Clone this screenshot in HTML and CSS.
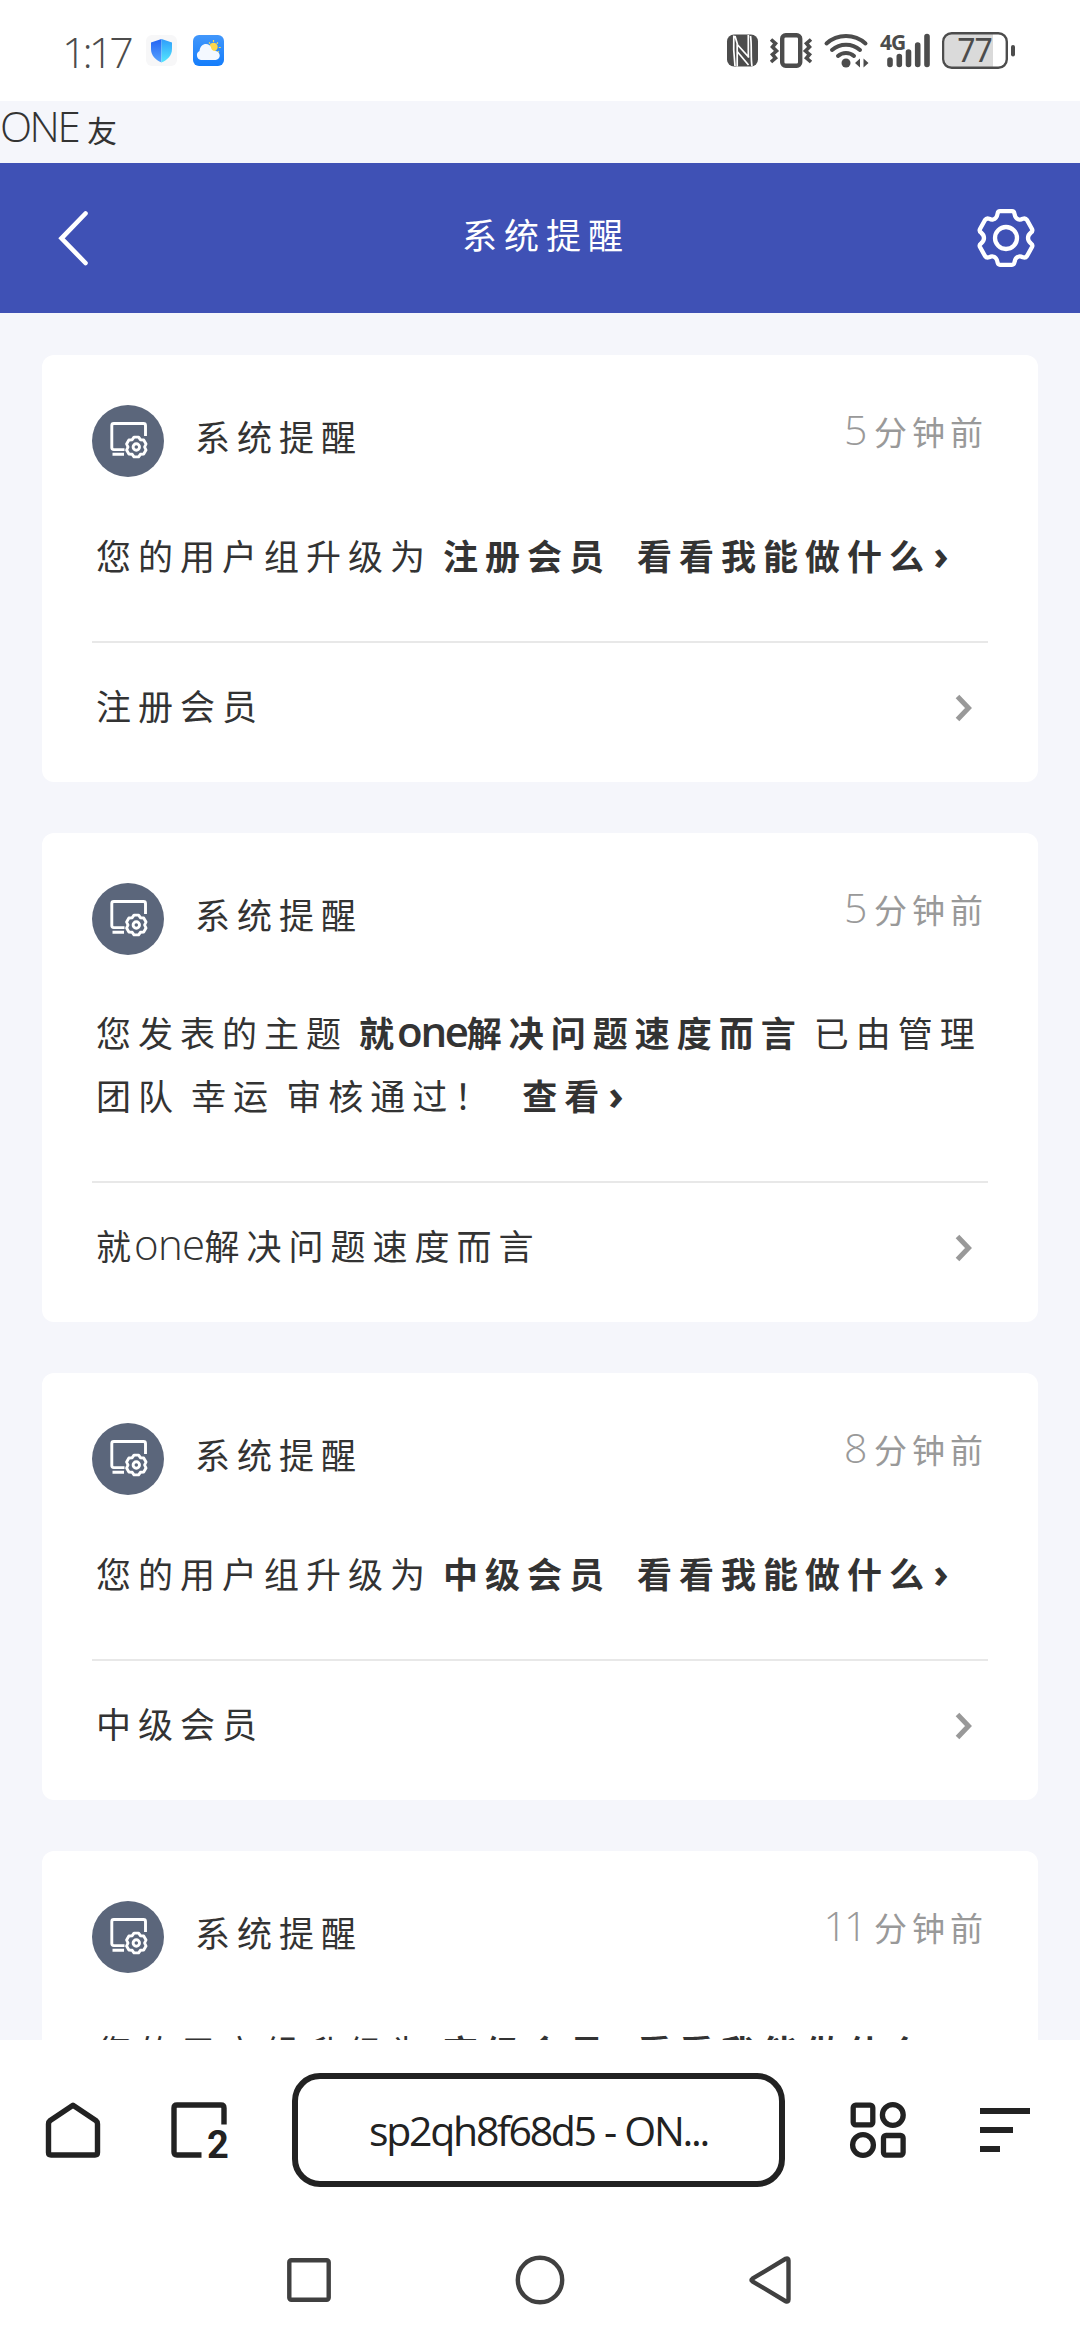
FILE: index.html
```html
<!DOCTYPE html>
<html lang="zh-CN">
<head>
<meta charset="utf-8">
<title>系统提醒</title>
<link rel="stylesheet" href="styles.css">
</head>
<body>
<svg class="sprite" width="0" height="0">
  <symbol id="notice" viewBox="0 0 72 72">
    <circle cx="36" cy="36" r="36" fill="#5b667b"/>
    <g fill="none" stroke="#fff" stroke-width="2.900">
      <path d="M32.500 44.600H21.800a2 2 0 0 1-2-2V20.500a2 2 0 0 1 2-2H51.500a2 2 0 0 1 2 2V31M20.500 49.200H32" />
      <path transform="translate(44.300 42)" stroke-linejoin="round" d="M-2.300-9.900H2.300L4.100-7.300 7.400-7 9.700-3 8.300 0 9.700 3 7.400 7 4.100 7.300 2.300 9.900H-2.300L-4.100 7.300-7.400 7-9.700 3-8.300 0-9.700-3-7.400-7-4.100-7.300Z"/>
      <circle cx="44.300" cy="42" r="3.200"/>
    </g>
  </symbol>
  <symbol id="chevron" viewBox="0 0 18 28">
    <path d="M2.500 2.500 13.500 14 2.500 25.500" fill="none" stroke="#999" stroke-width="5"/>
  </symbol>
</svg>

<header class="status">
  <span class="clock">1:17</span>
  <svg class="app" viewBox="0 0 31 31">
    <defs><linearGradient id="sl" x2="0" y2="1"><stop stop-color="#2262f3"/><stop offset="1" stop-color="#5aa6ff"/></linearGradient>
    <linearGradient id="sr" x2="0" y2="1"><stop stop-color="#2f9dfb"/><stop offset="1" stop-color="#55e8fd"/></linearGradient></defs>
    <rect width="31" height="31" rx="6" fill="#f7f7f8"/>
    <path d="M15.500 4 5 7.500V14c0 6.500 4.500 11 10.500 13.500z" fill="url(#sl)"/>
    <path d="M15.500 4 26 7.500V14c0 6.500-4.500 11-10.500 13.500z" fill="url(#sr)"/>
  </svg>
  <svg class="app" viewBox="0 0 31 31">
    <defs><linearGradient id="wb" x2="0" y2="1"><stop stop-color="#4297fb"/><stop offset="1" stop-color="#147dfb"/></linearGradient></defs>
    <rect width="31" height="31" rx="6" fill="url(#wb)"/>
    <circle cx="20.500" cy="12" r="4.200" fill="#ffd84c"/>
    <path d="M20.500 5v2M25 7.500l-1.300 1.200M27.800 12.500h-2M16 7.500l1.200 1.200M26 17.200l-1.200-1" stroke="#ffd84c" stroke-width="1.200"/>
    <path d="M8 25a4.800 4.800 0 0 1-1.500-9C7 11.500 9.800 9 13 9c2.500 0 4.300 1.500 5 3.500.5 2 1.700 3.500 4 3.500a4.500 4.500 0 0 1 .5 9z" fill="#f4f8ff"/>
  </svg>
  <span class="spacer"></span>
  <svg class="sys" width="288" height="40" viewBox="727 31 288 40" fill="none" stroke="#4c4c4c">
    <rect x="727" y="34.500" width="31" height="32" rx="7" fill="#4c4c4c" stroke="none"/>
    <path d="M733.800 35.500C733.300 45 733.800 56 735 66M737.200 66.500V44.500L749 57.500M737.200 51.500 748.500 65M735 36l2.500 8.500M748.300 35V57.500M750.500 36c1.500 9 0 22 1.500 30" stroke="#fff" stroke-width="1.700"/>
    <rect x="782.200" y="35.200" width="18" height="30.600" rx="3.500" stroke-width="4.400"/>
    <path d="M771 39.500l4.500 4-3 3.500 4 4-4 3.500 3 3.500-4.500 4M811 39.500l-4.500 4 3 3.500-4 4 4 3.500-3 3.500 4.500 4" stroke-width="3.600"/>
    <g stroke-width="4" stroke-linecap="round"><path d="M826.500 43.500c11-10 28-10 39 0M832 50c8-7 20-7 28 0M838 56c4.500-4 11.500-4 16 0"/></g>
    <circle cx="846" cy="63" r="4.500" fill="#4c4c4c" stroke="none"/>
    <path d="M855 63l5-4.500v9zM868.500 63l-5-4.500v9z" fill="#4c4c4c" stroke="none"/>
    <text x="880" y="50" class="net">4G</text>
    <g stroke-width="5.600" stroke-linecap="round"><path d="M890 60v4.500M899.300 56.500v8M908.500 52v12.500M917.700 45v19.500M927 36.500v28"/></g>
    <path d="M952 34h41v33h-41q-7 0-7-7V41q0-7 7-7z" fill="#dadada" stroke="none"/>
    <rect x="943.200" y="33.200" width="63.600" height="34.600" rx="8.500" stroke-width="2.400"/>
    <rect x="1011" y="45" width="4" height="11.500" rx="2" fill="#4c4c4c" stroke="none"/>
    <text x="974.500" y="62" text-anchor="middle" class="pct">77</text>
  </svg>
</header>

<div class="site"><span class="lat">ONE</span> 友</div>

<nav class="topbar">
  <svg width="36" height="60" viewBox="55 207 36 60"><path d="M84.500 212.500 60.500 237.300 84.500 262" fill="none" stroke="#fff" stroke-width="4.600" stroke-linecap="round"/></svg>
  <h1 class="topbar-title">系统提醒</h1>
  <svg width="60" height="60" viewBox="-30 -30 60 60" fill="none" stroke="#fff" stroke-width="4.300" stroke-linejoin="round">
    <circle r="11"/>
    <path d="M-6-26.800H6Q8-26.800 8.400-24.500C9-21 10.500-19 13-18.500Q14.500-18 17-19.300Q19.500-20.200 21-18L26-9Q27-7 25-5.500C22-3 22-1.500 22 0S22 3 25 5.500Q27 7 26 9L21 18Q19.500 20.200 17 19.300Q14.500 18 13 18.500C10.500 19 9 21 8.400 24.500Q8 26.800 6 26.800H-6Q-8 26.800-8.400 24.500C-9 21-10.500 19-13 18.500Q-14.500 18-17 19.300Q-19.500 20.200-21 18L-26 9Q-27 7-25 5.500C-22 3-22 1.500-22 0S-22-3-25-5.500Q-27-7-26-9L-21-18Q-19.500-20.200-17-19.300Q-14.500-18-13-18.500C-10.500-19-9-21-8.400-24.500Q-8-26.800-6-26.800Z"/>
  </svg>
</nav>

<main class="feed">
  <article class="card">
    <div class="head"><svg class="avatar"><use href="#notice"/></svg><h2 class="name">系统提醒</h2><time class="time"><span class="lat">5</span> 分钟前</time></div>
    <p class="message">您的用户组升级为 <b>注册会员</b><b class="link">看看我能做什么<span class="lat arrow">›</span></b></p>
    <div class="foot"><span>注册会员</span><svg class="more"><use href="#chevron"/></svg></div>
  </article>
  <article class="card">
    <div class="head"><svg class="avatar"><use href="#notice"/></svg><h2 class="name">系统提醒</h2><time class="time"><span class="lat">5</span> 分钟前</time></div>
    <p class="message">您发表的主题 <b>就<span class="lat word">one</span>解决问题速度而言</b> 已由管理<br>团队 幸运 审核通过<span class="mark">！</span><b class="link">查看<span class="lat arrow">›</span></b></p>
    <div class="foot"><span>就<span class="lat word">one</span>解决问题速度而言</span><svg class="more"><use href="#chevron"/></svg></div>
  </article>
  <article class="card">
    <div class="head"><svg class="avatar"><use href="#notice"/></svg><h2 class="name">系统提醒</h2><time class="time"><span class="lat">8</span> 分钟前</time></div>
    <p class="message">您的用户组升级为 <b>中级会员</b><b class="link">看看我能做什么<span class="lat arrow">›</span></b></p>
    <div class="foot"><span>中级会员</span><svg class="more"><use href="#chevron"/></svg></div>
  </article>
  <article class="card">
    <div class="head"><svg class="avatar"><use href="#notice"/></svg><h2 class="name">系统提醒</h2><time class="time"><span class="lat">11</span> 分钟前</time></div>
    <p class="message">您的用户组升级为 <b>高级会员</b><b class="link">看看我能做什么<span class="lat arrow">›</span></b></p>
  </article>
</main>

<footer class="browser">
  <svg width="56" height="56" viewBox="0 0 56 56" fill="none" stroke="#222" stroke-width="5.400" stroke-linejoin="round"><path d="M28 3.200 50.800 18.500Q52.500 19.800 52.500 22V50.500Q52.500 53 50 53H6Q3.500 53 3.500 50.500V22Q3.500 19.800 5.200 18.500Z"/></svg>
  <svg width="56" height="56" viewBox="0 0 56 56" fill="none" stroke="#222" stroke-width="5.400"><path d="M53 22.500V6Q53 3 50 3H6Q3 3 3 6V50Q3 53 6 53H30.500"/><text x="47" y="55.700" class="tabs" text-anchor="middle">2</text></svg>
  <div class="address"><span>sp2qh8f68d5 - ON...</span></div>
  <svg width="56" height="56" viewBox="0 0 56 56" fill="none" stroke="#222" stroke-width="5.300"><rect x="3.200" y="3.200" width="19.600" height="19.600" rx="2.500"/><circle cx="42.800" cy="13" r="10.400"/><circle cx="13" cy="43" r="10.400"/><rect x="33.500" y="33.500" width="19.600" height="19.600" rx="2.500"/></svg>
  <svg width="50" height="44" viewBox="0 0 50 44" fill="#222"><path d="M0 0h50v6H0zM0 19h33v6H0zM0 38h20v6H0z"/></svg>
</footer>
<div class="keys">
  <svg width="50" height="50" viewBox="-25 -25 50 50"><rect x="-19.700" y="-19.700" width="39.400" height="39.400" rx="2"/></svg>
  <svg width="50" height="50" viewBox="-25 -25 50 50"><circle r="22.200"/></svg>
  <svg width="50" height="50" viewBox="-25 -25 50 50"><path d="M-18.600-1.300 14.600-21.200Q17.500-22.500 17.500-19.500V19.500Q17.500 22.500 14.600 21.200L-18.600 1.300Q-20.500 0-18.600-1.300Z"/></svg>
</div>
</body>
</html>
```
FILE: styles.css
```css
* { box-sizing: border-box; margin: 0; }
body {
  display: flex;
  flex-direction: column;
  width: 1080px;
  height: 2340px;
  overflow: hidden;
  background: #fff;
  color: #333;
  font: 400 35px "Open Sans", "Noto Sans CJK SC", sans-serif;
  letter-spacing: 7px;
  word-spacing: -5px;
}
svg { display: block; flex: none; overflow: visible; }
.sprite { position: absolute; }
.lat { font-size: 42px; font-weight: 350; line-height: 0; letter-spacing: -2px; }
.word { margin-left: -4px; letter-spacing: -0.7px; }
b .word { font-weight: 600; letter-spacing: -2.3px; }
.arrow { margin-left: 2px; font-weight: 700; }

.status { display: flex; align-items: center; flex: none; height: 101px; padding: 0 65px 0 62px; }
.clock { width: 84px; font-size: 43px; font-weight: 350; line-height: 60px; letter-spacing: -4px; color: #4c4c4c; padding-top: 2px; }
.app { width: 31px; height: 31px; margin-right: 16px; }
.spacer { flex: 1; }
.net { font: 700 21px "Noto Sans", sans-serif; letter-spacing: -1px; fill: #4c4c4c; stroke: none; }
.pct { font: 400 32px "Noto Sans", sans-serif; letter-spacing: -1px; fill: #4c4c4c; stroke: none; }

.site { flex: none; height: 62px; line-height: 60px; font-size: 30px; word-spacing: -6px; background: #f5f6fb; }
.site .lat { letter-spacing: -2.5px; }

.topbar { display: flex; align-items: center; justify-content: space-between; flex: none; height: 150px; padding: 1px 44px 2px 56px; background: #3f51b5; color: #fff; }
.topbar-title { font-size: 35px; font-weight: 400; line-height: 60px; padding: 0 0 4px 24px; }

.feed { flex: 1; min-height: 0; overflow: hidden; display: flex; flex-direction: column; gap: 51px; padding: 42px 42px 0; background: #f5f6fb; }
.card { flex: none; padding: 50px 50px 0; border-radius: 12px; background: #fff; }
.head { display: flex; align-items: flex-start; height: 72px; }
.avatar { width: 72px; height: 72px; }
.name { flex: 1; padding-left: 31px; font-size: 35px; font-weight: 400; line-height: 66px; }
.time { color: #999; font-size: 33px; letter-spacing: 5px; word-spacing: -4px; line-height: 56px; }
.time .lat { font-size: 41px; letter-spacing: -3px; }
.message { padding: 48px 0 53px 4px; line-height: 63px; white-space: nowrap; }
.message:has(br) { padding-top: 47px; }
.message b { font-weight: 700; }
.message .link { margin-left: 26px; }
.mark { font-family: "Noto Sans CJK TC", sans-serif; line-height: 0; }
.foot { display: flex; align-items: center; justify-content: space-between; height: 141px; padding: 0 15px 16px 4px; border-top: 2px solid #e8e8e8; }
.more { width: 18px; height: 28px; margin-top: 7px; }

.browser { display: flex; align-items: center; flex: none; height: 180px; padding: 0 50px 0 45px; background: #fff; }
.address { width: 493px; height: 114px; margin: 0 65px; border: 6px solid #222; border-radius: 28px; display: flex; align-items: center; justify-content: center; font-weight: 500; font-size: 41px; letter-spacing: -2.300px; word-spacing: 1px; color: #222; }
.browser > svg:nth-child(2) { margin-left: 70px; }
.browser > svg:last-child { margin-left: 74px; }
.tabs { font: 700 38px Roboto, sans-serif; letter-spacing: 0; fill: #222; stroke: none; }
.keys { display: flex; justify-content: center; gap: 181px; flex: none; height: 120px; padding-top: 35px; background: #fff; }
.keys svg { fill: none; stroke: #404040; stroke-width: 4.4px; }
```
